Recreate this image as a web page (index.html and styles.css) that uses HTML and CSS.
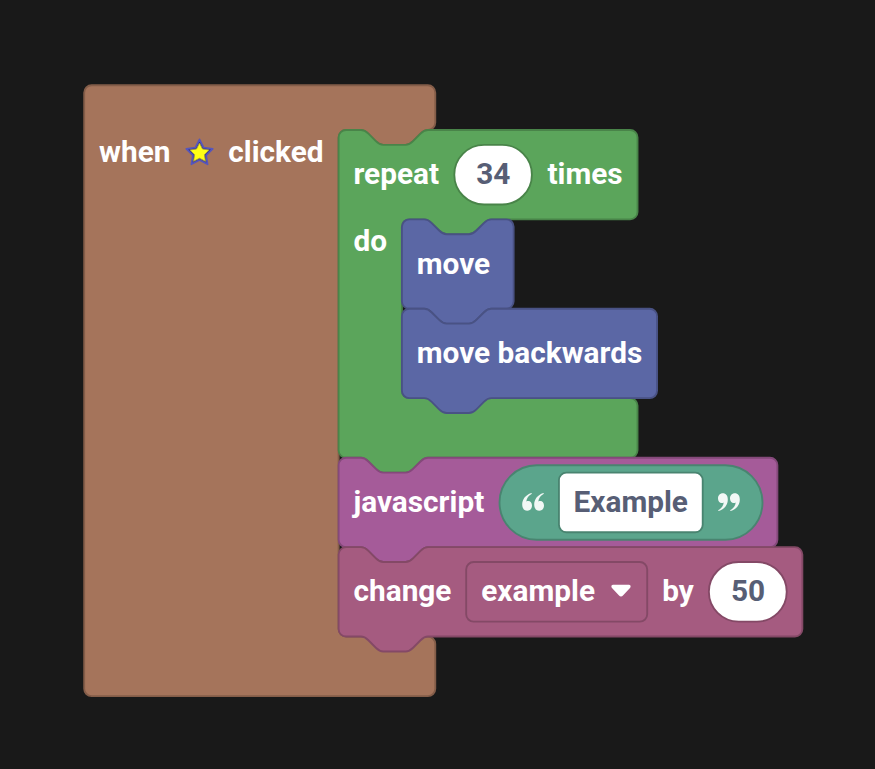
FILE: index.html
```html
<!DOCTYPE html>
<html lang="en">
<head>
<meta charset="utf-8">
<title>Block workspace</title>
<link rel="stylesheet" href="styles.css">
</head>
<body>
<main class="workspace">
  <svg class="shapes" width="875" height="769" viewBox="0 0 875 769" aria-hidden="true">
    <g transform="translate(84.2 85.25) scale(1.8625)">
      <path class="event" d="M0 4a4 4 0 0 1 4-4H184.5a4 4 0 0 1 4 4V20a4 4 0 0 1-4 4c-2 0-3 1-4 2l-4 4c-1 1-2 2-4 2h-12c-2 0-3-1-4-2l-4-4c-1-1-2-2-4-2h-7.9a4 4 0 0 0-4 4V292a4 4 0 0 0 4 4H184.5a4 4 0 0 1 4 4V324a4 4 0 0 1-4 4H4a4 4 0 0 1-4-4z"/>
    </g>
    <g transform="translate(338.6 129.95) scale(1.8625)">
      <path class="loop" d="M0 4a4 4 0 0 1 4-4h8c2 0 3 1 4 2l4 4c1 1 2 2 4 2h12c2 0 3-1 4-2l4-4c1-1 2-2 4-2H156.5a4 4 0 0 1 4 4V44a4 4 0 0 1-4 4H82c-2 0-3 1-4 2l-4 4c-1 1-2 2-4 2h-12c-2 0-3-1-4-2l-4-4c-1-1-2-2-4-2h-8a4 4 0 0 0-4 4V140a4 4 0 0 0 4 4H156.5a4 4 0 0 1 4 4V172a4 4 0 0 1-4 4H48c-2 0-3 1-4 2l-4 4c-1 1-2 2-4 2h-12c-2 0-3-1-4-2l-4-4c-1-1-2-2-4-2H4a4 4 0 0 1-4-4z"/>
    </g>
    <g transform="translate(401.9 219.35) scale(1.8625)">
      <path class="motion" d="M0 4a4 4 0 0 1 4-4h8c2 0 3 1 4 2l4 4c1 1 2 2 4 2h12c2 0 3-1 4-2l4-4c1-1 2-2 4-2H56a4 4 0 0 1 4 4V44a4 4 0 0 1-4 4H48c-2 0-3 1-4 2l-4 4c-1 1-2 2-4 2h-12c-2 0-3-1-4-2l-4-4c-1-1-2-2-4-2H4a4 4 0 0 1-4-4z"/>
    </g>
    <g transform="translate(401.9 308.75) scale(1.8625)">
      <path class="motion" d="M0 4a4 4 0 0 1 4-4h8c2 0 3 1 4 2l4 4c1 1 2 2 4 2h12c2 0 3-1 4-2l4-4c1-1 2-2 4-2H133a4 4 0 0 1 4 4V44a4 4 0 0 1-4 4H48c-2 0-3 1-4 2l-4 4c-1 1-2 2-4 2h-12c-2 0-3-1-4-2l-4-4c-1-1-2-2-4-2H4a4 4 0 0 1-4-4z"/>
    </g>
    <g transform="translate(338.6 457.75) scale(1.8625)">
      <path class="code" d="M0 4a4 4 0 0 1 4-4h8c2 0 3 1 4 2l4 4c1 1 2 2 4 2h12c2 0 3-1 4-2l4-4c1-1 2-2 4-2H231.6a4 4 0 0 1 4 4V44a4 4 0 0 1-4 4H48c-2 0-3 1-4 2l-4 4c-1 1-2 2-4 2h-12c-2 0-3-1-4-2l-4-4c-1-1-2-2-4-2H4a4 4 0 0 1-4-4z"/>
      <rect class="text" x="86.4" y="4" width="141.2" height="40" rx="20"/>
      <rect class="text-input" x="118.3" y="8" width="77.2" height="32" rx="4"/>
    </g>
    <g transform="translate(338.6 547.15) scale(1.8625)">
      <path class="variable" d="M0 4a4 4 0 0 1 4-4h8c2 0 3 1 4 2l4 4c1 1 2 2 4 2h12c2 0 3-1 4-2l4-4c1-1 2-2 4-2H245a4 4 0 0 1 4 4V44a4 4 0 0 1-4 4H48c-2 0-3 1-4 2l-4 4c-1 1-2 2-4 2h-12c-2 0-3-1-4-2l-4-4c-1-1-2-2-4-2H4a4 4 0 0 1-4-4z"/>
      <rect class="variable" x="68.5" y="8" width="97.2" height="32" rx="4"/>
      <rect class="variable-input" x="198.8" y="8" width="41.8" height="32" rx="16"/>
    </g>
    <rect class="loop-input" x="454.3" y="144.85" width="77.6" height="59.6" rx="29.8"/>
  </svg>

  <div class="hat">
    <div class="hat-label">
      <span>when</span>
      <svg class="star" viewBox="1.4 0.8 27.2 27.2" aria-hidden="true">
        <path class="star-edge" d="M15 2l3.8 7.7 8.6 1.3-6.2 6 1.4 8.5-7.6-4-7.6 4L8.800 17l-6.200-6 8.600-1.300z"/>
        <path class="star-face" d="M15 5.500l2.800 5.600 6.200 1-4.400 4.400 1 6.200-5.600-2.900-5.600 2.900 1-6.200-4.400-4.400 6.200-1z"/>
      </svg>
      <span>clicked</span>
    </div>
    <div class="stack">
      <div class="row raised"><span>repeat</span><span class="number">34</span><span>times</span></div>
      <div class="body">
        <span class="do">do</span>
        <div class="substack">
          <div class="row"><span>move</span></div>
          <div class="row"><span>move backwards</span></div>
        </div>
      </div>
      <div class="row">
        <span>javascript</span>
        <div class="string">
          <svg class="quote" viewBox="0 0 24 20" aria-hidden="true"><path d="M10.400.9L10.900 1.700C7.600 3.500 5.600 6.200 5.300 9.500C6 9.100 6.600 9 7.300 9C9.500 9 11 10.800 11 13.500C11 16.600 9 18.700 6.200 18.700C3 18.700 1.200 16.300 1.200 12.600C1.200 7.300 4.400 2.900 10.400.9zM22.400.9L22.900 1.700C19.600 3.500 17.600 6.200 17.300 9.500C18 9.100 18.600 9 19.300 9C21.500 9 23 10.800 23 13.500C23 16.600 21 18.700 18.200 18.700C15 18.700 13.200 16.300 13.200 12.600C13.200 7.300 16.400 2.900 22.400.9z"/></svg>
          <span class="value">Example</span>
          <svg class="quote closing" viewBox="0 0 24 20" aria-hidden="true"><path d="M10.400.9L10.900 1.700C7.600 3.500 5.600 6.200 5.300 9.500C6 9.100 6.600 9 7.300 9C9.500 9 11 10.800 11 13.500C11 16.600 9 18.700 6.200 18.700C3 18.700 1.200 16.300 1.200 12.600C1.200 7.300 4.400 2.900 10.400.9zM22.400.9L22.900 1.700C19.600 3.500 17.600 6.200 17.300 9.500C18 9.100 18.600 9 19.300 9C21.500 9 23 10.800 23 13.500C23 16.600 21 18.700 18.200 18.700C15 18.700 13.200 16.300 13.200 12.600C13.200 7.300 16.400 2.900 22.400.9z"/></svg>
        </div>
      </div>
      <div class="row raised">
        <span>change</span>
        <div class="dropdown">
          <span>example</span>
          <svg class="arrow" viewBox="0 0 20 14" aria-hidden="true"><path d="M2 .8H18C19.700.8 20.100 2.700 19 3.900L12.200 11.300Q10 13.700 7.800 11.300L1 3.900C-.1 2.700.3.8 2 .8z"/></svg>
        </div>
        <span>by</span>
        <span class="number">50</span>
      </div>
    </div>
  </div>
</main>
</body>
</html>
```
FILE: styles.css
```css
body {
  margin: 0;
  background: #191919;
}

.workspace {
  position: relative;
  width: 875px;
  height: 769px;
  overflow: hidden;
  color: #fff;
  font: 700 29.8px/36px Roboto, sans-serif;
  white-space: nowrap;
}

.shapes {
  position: absolute;
  inset: 0;
}

.shapes path,
.shapes g rect { stroke-width: 1; }

.event { fill: #a5745b; stroke: #845d49; }
.loop { fill: #5ba55b; stroke: #498449; }
.motion { fill: #5b67a5; stroke: #495284; }
.code { fill: #a55b99; stroke: #84497a; }
.text { fill: #5ba58c; stroke: #498470; }
.variable { fill: #a55b80; stroke: #844966; }
.text-input { fill: #fff; stroke: #498470; }
.variable-input { fill: #fff; stroke: #844966; }
.loop-input { fill: #fff; stroke: #498449; stroke-width: 1.86; }

.hat {
  position: relative;
  display: flex;
  padding: 85.2px 0 0 84.2px;
}

.hat-label {
  box-sizing: border-box;
  width: 254.4px;
  height: 134px;
  padding-left: 14.9px;
  display: flex;
  align-items: center;
  gap: 14.9px;
}

.star {
  width: 29px;
  height: 29px;
  margin: 0 -0.5px;
}

.star-edge {
  fill: #30308c;
  stroke: #5656bc;
  stroke-width: 1.6;
  stroke-linejoin: round;
}

.star-face {
  fill: #ffff14;
  stroke: #a39b3c;
  stroke-width: 0.8;
}

.stack { padding-top: 44.7px; }

.row {
  box-sizing: border-box;
  height: 89.4px;
  padding-left: 14.9px;
  display: flex;
  align-items: center;
  gap: 14.9px;
}

.raised { padding-bottom: 1.6px; }

.number {
  width: 78.6px;
  text-align: center;
  color: #575e75;
}

.body {
  height: 238.4px;
  display: flex;
}

.do {
  width: 48.4px;
  padding: 3.4px 0 0 14.9px;
}

.string {
  display: flex;
  align-items: center;
  padding-left: 21.6px;
}

.quote {
  width: 24px;
  height: 20px;
  fill: #fff;
  fill-opacity: 0.92;
}

.closing { transform: rotate(180deg); }

.value {
  width: 145px;
  margin: 0 13.5px;
  text-align: center;
  color: #575e75;
}

.dropdown {
  box-sizing: border-box;
  width: 181px;
  padding-left: 14.9px;
  display: flex;
  align-items: center;
  gap: 16px;
}

.arrow {
  width: 20px;
  height: 14px;
  margin-top: 1px;
  fill: #fff;
}
```
